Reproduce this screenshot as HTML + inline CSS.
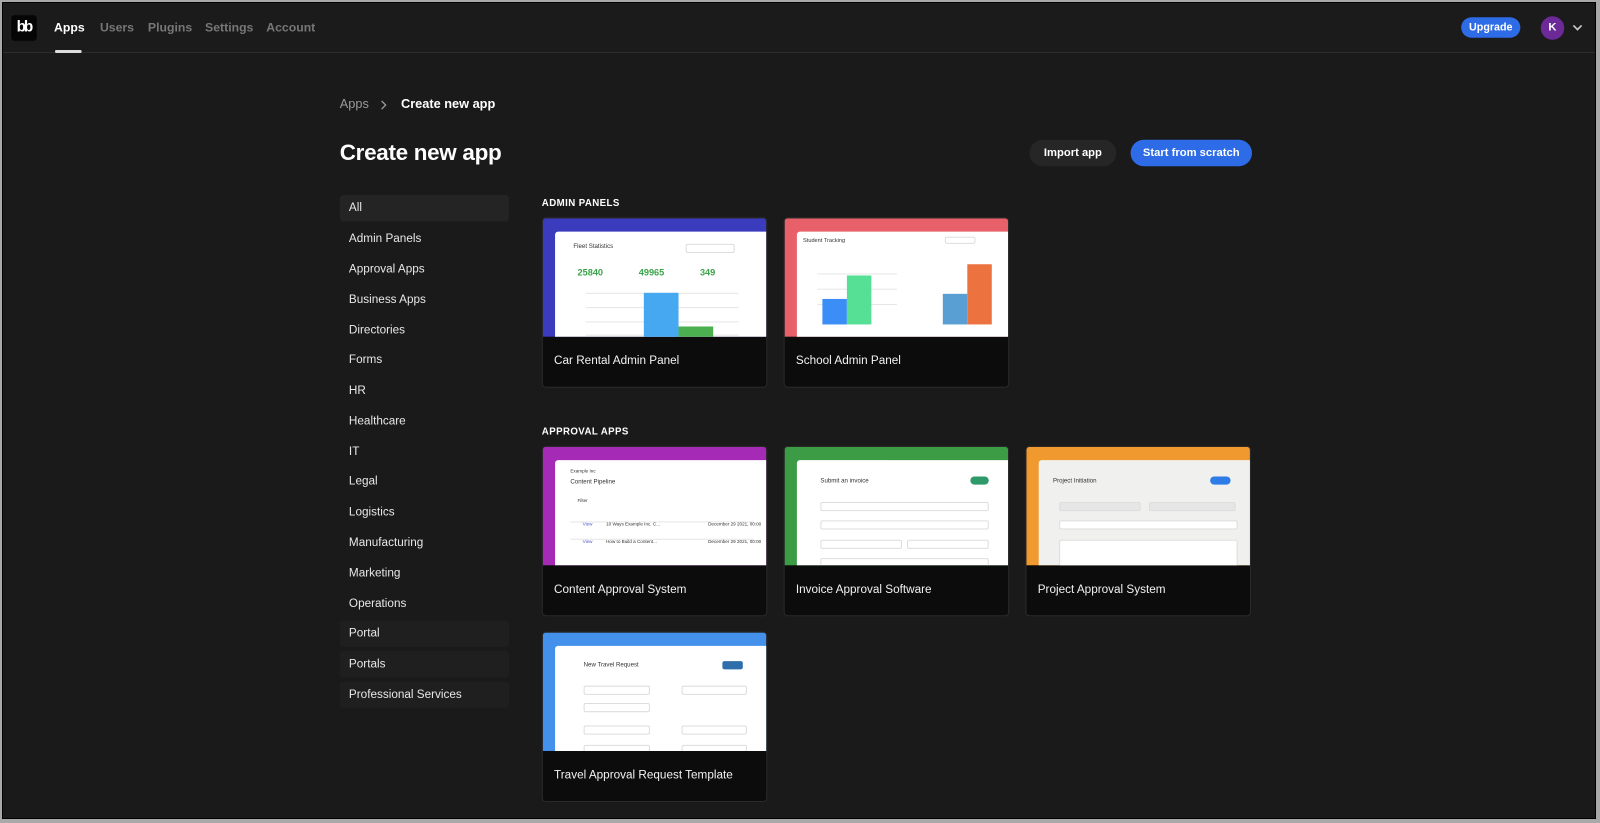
<!DOCTYPE html>
<html><head><meta charset="utf-8">
<style>
*{box-sizing:border-box;margin:0;padding:0}
html,body{width:1600px;height:823px;overflow:hidden;background:#a9a9a9;font-family:"Liberation Sans",sans-serif}
.frame{position:absolute;left:2px;top:2px;width:1594px;height:817px;background:#1a1a1a;border:1px solid #000;overflow:hidden}
.in{position:absolute;left:-1px;top:-1px;width:1568px;height:810px;transform:scale(1.0204);transform-origin:0 0}
.nav{position:absolute;left:0;top:0;width:100%;height:50px;border-bottom:1px solid #2c2c2c;background:#1b1b1b}
.logo{position:absolute;left:9px;top:13px;width:25px;height:25px;background:#050505;border-radius:3px;color:#fff;font-weight:bold;font-size:15px;letter-spacing:-2px;line-height:24px;text-align:center}
.nl{position:absolute;top:18px;font-size:12px;font-weight:bold;color:#777}
.ul{position:absolute;left:52px;top:47px;width:26px;height:3px;background:#ddd;border-radius:1px}
.upg{position:absolute;left:1430px;top:15px;width:58px;height:20px;border-radius:10px;background:#2e6be6;color:#fff;font-size:10.5px;font-weight:bold;text-align:center;line-height:20px}
.av{position:absolute;left:1508px;top:14px;width:23px;height:23px;border-radius:50%;background:#6b2a98;color:#fff;font-size:11px;font-weight:bold;text-align:center;line-height:23px}
.t{position:absolute;color:#fff}
.side{position:absolute;left:331px;width:166px;height:26px;border-radius:4px;font-size:11.5px;color:#e8e8e8;padding-left:9px;line-height:26px}
.side.b{background:#242424}
.sec{position:absolute;font-size:9.5px;font-weight:bold;color:#fff;letter-spacing:.4px}
.card{position:absolute;width:221px;height:167px;border-radius:4px;background:#0c0c0c;overflow:hidden;border:1px solid #2a2a2a}
.card .top{position:absolute;left:0;top:0;width:100%;height:116px}
.card .wh{position:absolute;left:12px;top:13px;right:0;bottom:0;background:#fff;border-radius:3px 0 0 0;overflow:hidden}
.card .nm{position:absolute;left:11px;top:134px;font-size:11.5px;color:#f2f2f2}
.s{position:absolute;background:#e6e6e6}
.tx{position:absolute;font-size:5px;color:#333}
.bx{position:absolute;border:1px solid #ddd;border-radius:2px;height:9px}
</style></head><body>
<div class="frame"><div class="in">
<div class="nav">
<div class="logo">bb</div>
<div class="nl" style="left:51px;color:#fff">Apps</div>
<div class="nl" style="left:96px">Users</div>
<div class="nl" style="left:143px">Plugins</div>
<div class="nl" style="left:199px">Settings</div>
<div class="nl" style="left:259px">Account</div>
<div class="ul"></div>
<div class="upg">Upgrade</div>
<div class="av">K</div>
<svg style="position:absolute;left:1539px;top:21px" width="10" height="8"><path d="M1 2 L5 6 L9 2" stroke="#ccc" stroke-width="1.6" fill="none"/></svg>
</div>

<div class="t" style="left:331px;top:93px;font-size:12.5px;color:#999">Apps</div>
<svg style="position:absolute;left:370px;top:96px" width="8" height="10"><path d="M2 1 L6 5 L2 9" stroke="#999" stroke-width="1.3" fill="none"/></svg>
<div class="t" style="left:391px;top:93px;font-size:12.5px;font-weight:bold">Create new app</div>
<div class="t" style="left:331px;top:135px;font-size:22px;font-weight:bold;letter-spacing:-.3px">Create new app</div>
<div class="t" style="left:1007px;top:135px;width:85px;height:26px;border-radius:13px;background:#262626;font-size:11px;font-weight:bold;text-align:center;line-height:26px">Import app</div>
<div class="t" style="left:1106px;top:135px;width:119px;height:26px;border-radius:13px;background:#2e6be6;font-size:11px;font-weight:bold;text-align:center;line-height:26px">Start from scratch</div>

<div class="side b" style="top:189px">All</div>
<div class="side" style="top:219px">Admin Panels</div>
<div class="side" style="top:249px">Approval Apps</div>
<div class="side" style="top:279px">Business Apps</div>
<div class="side" style="top:309px">Directories</div>
<div class="side" style="top:338px">Forms</div>
<div class="side" style="top:368px">HR</div>
<div class="side" style="top:398px">Healthcare</div>
<div class="side" style="top:428px">IT</div>
<div class="side" style="top:457px">Legal</div>
<div class="side" style="top:487px">Logistics</div>
<div class="side" style="top:517px">Manufacturing</div>
<div class="side" style="top:547px">Marketing</div>
<div class="side" style="top:577px">Operations</div>
<div class="side b" style="top:606px;background:#1f1f1f">Portal</div>
<div class="side b" style="top:636px;background:#1f1f1f">Portals</div>
<div class="side b" style="top:666px;background:#1f1f1f">Professional Services</div>

<div class="sec" style="left:529px;top:192px">ADMIN PANELS</div>
<div class="sec" style="left:529px;top:416px">APPROVAL APPS</div>

<div class="card" style="left:529px;top:211px">
<div class="top" style="background:#3b3bbd"><div class="wh">
<div class="tx" style="left:18px;top:12px;font-size:6px">Fleet Statistics</div>
<div class="bx" style="left:128px;top:12px;width:48px"></div>
<div class="tx" style="left:22px;top:35px;font-size:9px;color:#3aa34a;font-weight:bold">25840</div>
<div class="tx" style="left:82px;top:35px;font-size:9px;color:#3aa34a;font-weight:bold">49965</div>
<div class="tx" style="left:142px;top:35px;font-size:9px;color:#3aa34a;font-weight:bold">349</div>
<div class="s" style="left:30px;top:60px;width:150px;height:1px"></div>
<div class="s" style="left:30px;top:74px;width:150px;height:1px"></div>
<div class="s" style="left:30px;top:88px;width:150px;height:1px"></div>
<div class="s" style="left:30px;top:101px;width:150px;height:1px"></div>
<div class="s" style="left:87px;top:60px;width:34px;height:50px;background:#45a8f0"></div>
<div class="s" style="left:121px;top:93px;width:34px;height:20px;background:#4caf50"></div>
</div></div>
<div class="nm">Car Rental Admin Panel</div></div>

<div class="card" style="left:766px;top:211px">
<div class="top" style="background:#e8606a"><div class="wh">
<div class="tx" style="left:6px;top:6px;font-size:5.5px">Student Tracking</div>
<div class="bx" style="left:145px;top:5px;width:30px;height:7px"></div>
<div class="s" style="left:20px;top:41px;width:78px;height:1px"></div>
<div class="s" style="left:20px;top:56px;width:78px;height:1px"></div>
<div class="s" style="left:20px;top:71px;width:78px;height:1px"></div>
<div class="s" style="left:25px;top:66px;width:24px;height:25px;background:#3a8ef5"></div>
<div class="s" style="left:49px;top:43px;width:24px;height:48px;background:#55e096"></div>
<div class="s" style="left:143px;top:61px;width:24px;height:30px;background:#5a9fd4"></div>
<div class="s" style="left:167px;top:32px;width:24px;height:59px;background:#ec7340"></div>
</div></div>
<div class="nm">School Admin Panel</div></div>

<div class="card" style="left:529px;top:435px">
<div class="top" style="background:#a52bb7"><div class="wh">
<div class="tx" style="left:15px;top:8px;font-size:4.5px">Example Inc</div>
<div class="tx" style="left:15px;top:19px;font-size:6px">Content Pipeline</div>
<div class="tx" style="left:22px;top:37px;font-size:4.5px">Filter</div>
<div class="s" style="left:15px;top:60px;width:180px;height:1px"></div>
<div class="s" style="left:15px;top:77px;width:180px;height:1px"></div>
<div class="tx" style="left:27px;top:60px;font-size:4.5px;color:#55c">View</div>
<div class="tx" style="left:27px;top:77px;font-size:4.5px;color:#55c">View</div>
<div class="tx" style="left:50px;top:60px;font-size:4.5px">10 Ways Example Inc. C...</div>
<div class="tx" style="left:50px;top:77px;font-size:4.5px">How to Build a Content...</div>
<div class="tx" style="left:150px;top:60px;font-size:4.5px">December 29 2021, 00:00</div>
<div class="tx" style="left:150px;top:77px;font-size:4.5px">December 29 2021, 00:00</div>
</div></div>
<div class="nm">Content Approval System</div></div>

<div class="card" style="left:766px;top:435px">
<div class="top" style="background:#3c9c46"><div class="wh">
<div class="tx" style="left:23px;top:18px;font-size:6px">Submit an invoice</div>
<div class="s" style="left:170px;top:16px;width:18px;height:8px;border-radius:4px;background:#2e9a6a"></div>
<div class="bx" style="left:23px;top:41px;width:165px"></div>
<div class="bx" style="left:23px;top:59px;width:165px"></div>
<div class="bx" style="left:23px;top:78px;width:80px"></div>
<div class="bx" style="left:108px;top:78px;width:80px"></div>
<div class="bx" style="left:23px;top:96px;width:165px"></div>
</div></div>
<div class="nm">Invoice Approval Software</div></div>

<div class="card" style="left:1003px;top:435px">
<div class="top" style="background:#f0992f"><div class="wh" style="background:#f0f0ee">
<div class="tx" style="left:14px;top:18px;font-size:6px">Project Initiation</div>
<div class="s" style="left:168px;top:16px;width:20px;height:8px;border-radius:4px;background:#2e7de6"></div>
<div class="bx" style="left:20px;top:41px;width:80px;background:#e6e6e6"></div>
<div class="bx" style="left:108px;top:41px;width:85px;background:#e6e6e6"></div>
<div class="bx" style="left:20px;top:59px;width:175px;background:#fff"></div>
<div class="bx" style="left:20px;top:78px;width:175px;height:26px;background:#fff"></div>
</div></div>
<div class="nm">Project Approval System</div></div>

<div class="card" style="left:529px;top:617px">
<div class="top" style="background:#4391ea"><div class="wh">
<div class="tx" style="left:28px;top:16px;font-size:6px">New Travel Request</div>
<div class="s" style="left:164px;top:15px;width:20px;height:8px;border-radius:2px;background:#2e6eaa"></div>
<div class="bx" style="left:28px;top:39px;width:65px"></div>
<div class="bx" style="left:124px;top:39px;width:64px"></div>
<div class="bx" style="left:28px;top:56px;width:65px"></div>
<div class="bx" style="left:28px;top:78px;width:65px"></div>
<div class="bx" style="left:124px;top:78px;width:64px"></div>
<div class="bx" style="left:28px;top:97px;width:65px"></div>
<div class="bx" style="left:124px;top:97px;width:64px"></div>
</div></div>
<div class="nm">Travel Approval Request Template</div></div>
</div></div>
</body></html>
